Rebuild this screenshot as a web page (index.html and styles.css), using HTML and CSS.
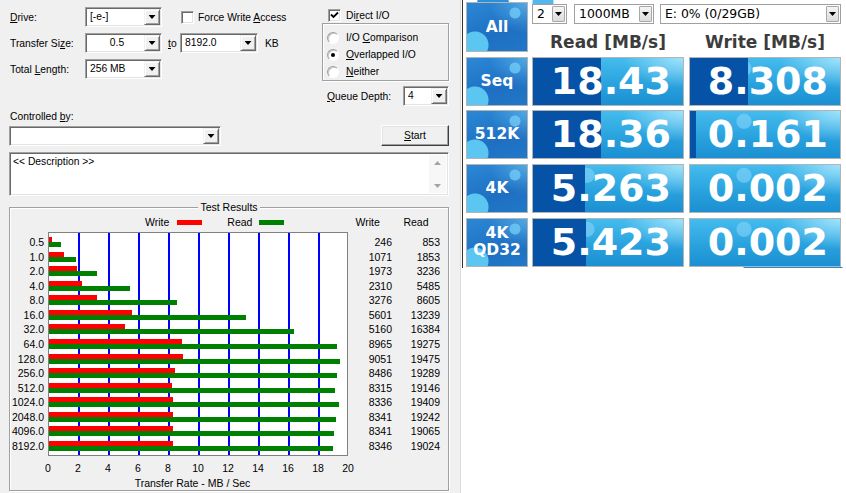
FILE: index.html
```html
<!DOCTYPE html>
<html>
<head>
<meta charset="utf-8">
<link rel="stylesheet" href="styles.css">
</head>
<body>
<div class="screen">
  <div class="atto">
    <div class="top">
      <div class="form">
        <div class="frow">
          <span class="lbl"><u>D</u>rive:</span>
          <div class="combo c77"><span class="cv">[-e-]</span><i class="cb"></i></div>
          <span class="check fwa"></span><span class="ctext">Force Write <u>A</u>ccess</span>
        </div>
        <div class="frow">
          <span class="lbl">Transfer Si<u>z</u>e:</span>
          <div class="combo c77"><span class="cv center">0.5</span><i class="cb"></i></div>
          <span class="to"><u>t</u>o</span>
          <div class="combo c78"><span class="cv">8192.0</span><i class="cb"></i></div>
          <span class="kb">KB</span>
        </div>
        <div class="frow">
          <span class="lbl">Total <u>L</u>ength:</span>
          <div class="combo c77"><span class="cv">256 MB</span><i class="cb"></i></div>
        </div>
      </div>
      <div class="opts">
        <div class="orow">
          <span class="check"><svg width="11" height="11" viewBox="0 0 11 11"><path d="M2 4.5 L4.5 7 L9 2.5" fill="none" stroke="#000" stroke-width="1.8"/></svg></span>
          <span class="ctext">Di<u>r</u>ect I/O</span>
        </div>
        <div class="rgroup">
          <div class="rrow"><span class="radio"></span><span>I/O <u>C</u>omparison</span></div>
          <div class="rrow"><span class="radio on"></span><span><u>O</u>verlapped I/O</span></div>
          <div class="rrow"><span class="radio"></span><span><u>N</u>either</span></div>
        </div>
        <div class="qrow">
          <span><u>Q</u>ueue Depth:</span>
          <div class="combo c46"><span class="cv">4</span><i class="cb"></i></div>
        </div>
      </div>
    </div>
    <div class="ctl-label">Controlled <u>b</u>y:</div>
    <div class="ctl-row">
      <div class="combo c212"><span class="cv"></span><i class="cb"></i></div>
      <div class="btn"><span><u>S</u>tart</span></div>
    </div>
    <div class="desc">
      <div class="desc-text">&lt;&lt; Description &gt;&gt;</div>
      <div class="sbar"><i class="sup"></i><i class="sdown"></i></div>
    </div>
    <div class="results">
      <div class="gtitle">Test Results</div>
      <div class="legend">
        <span class="lg-w">Write</span><i class="sw red"></i>
        <span class="lg-r">Read</span><i class="sw green"></i>
        <span class="hd-w">Write</span><span class="hd-r">Read</span>
      </div>
      <div class="chartrow">
        <div class="ylab">
          <div>0.5</div><div>1.0</div><div>2.0</div><div>4.0</div><div>8.0</div><div>16.0</div><div>32.0</div><div>64.0</div><div>128.0</div><div>256.0</div><div>512.0</div><div>1024.0</div><div>2048.0</div><div>4096.0</div><div>8192.0</div>
        </div>
        <div class="plot">
          <div class="brow"><i class="w" style="width:3px"></i><i class="r" style="width:12px"></i></div>
          <div class="brow"><i class="w" style="width:15px"></i><i class="r" style="width:27px"></i></div>
          <div class="brow"><i class="w" style="width:28px"></i><i class="r" style="width:48px"></i></div>
          <div class="brow"><i class="w" style="width:33px"></i><i class="r" style="width:81px"></i></div>
          <div class="brow"><i class="w" style="width:48px"></i><i class="r" style="width:128px"></i></div>
          <div class="brow"><i class="w" style="width:83px"></i><i class="r" style="width:197px"></i></div>
          <div class="brow"><i class="w" style="width:76px"></i><i class="r" style="width:245px"></i></div>
          <div class="brow"><i class="w" style="width:133px"></i><i class="r" style="width:288px"></i></div>
          <div class="brow"><i class="w" style="width:134px"></i><i class="r" style="width:291px"></i></div>
          <div class="brow"><i class="w" style="width:126px"></i><i class="r" style="width:288px"></i></div>
          <div class="brow"><i class="w" style="width:123px"></i><i class="r" style="width:286px"></i></div>
          <div class="brow"><i class="w" style="width:124px"></i><i class="r" style="width:290px"></i></div>
          <div class="brow"><i class="w" style="width:124px"></i><i class="r" style="width:287px"></i></div>
          <div class="brow"><i class="w" style="width:124px"></i><i class="r" style="width:285px"></i></div>
          <div class="brow"><i class="w" style="width:124px"></i><i class="r" style="width:284px"></i></div>
        </div>
        <div class="nums nw">
          <div>246</div><div>1071</div><div>1973</div><div>2310</div><div>3276</div><div>5601</div><div>5160</div><div>8965</div><div>9051</div><div>8486</div><div>8315</div><div>8336</div><div>8341</div><div>8341</div><div>8346</div>
        </div>
        <div class="nums nr">
          <div>853</div><div>1853</div><div>3236</div><div>5485</div><div>8605</div><div>13239</div><div>16384</div><div>19275</div><div>19475</div><div>19289</div><div>19146</div><div>19409</div><div>19242</div><div>19065</div><div>19024</div>
        </div>
      </div>
      <div class="xlab">
        <span>0</span><span>2</span><span>4</span><span>6</span><span>8</span><span>10</span><span>12</span><span>14</span><span>16</span><span>18</span><span>20</span>
      </div>
      <div class="xtitle">Transfer Rate - MB / Sec</div>
    </div>
  </div>
  <div class="right">
    <div class="cdm">
      <div class="lb all">All</div>
      <div class="topctl">
        <div class="ddrow">
          <div class="dd d35"><span class="dv">2</span><i class="db"></i></div>
          <div class="dd d80"><span class="dv">1000MB</span><i class="db"></i></div>
          <div class="dd d181"><span class="dv">E: 0% (0/29GB)</span><i class="db"></i></div>
        </div>
        <div class="heads"><span class="hr">Read [MB/s]</span><span class="hw">Write [MB/s]</span></div>
      </div>
      <div class="lb">Seq</div>
      <div class="vb" style="--m:68px">18.43</div>
      <div class="vb wcol" style="--m:58px">8.308</div>
      <div class="lb">512K</div>
      <div class="vb" style="--m:68px">18.36</div>
      <div class="vb wcol" style="--m:6px">0.161</div>
      <div class="lb">4K</div>
      <div class="vb" style="--m:52px">5.263</div>
      <div class="vb wcol" style="--m:0px">0.002</div>
      <div class="lb two">4K<br>QD32</div>
      <div class="vb" style="--m:53px">5.423</div>
      <div class="vb wcol" style="--m:0px">0.002</div>
    </div>
  </div>
</div>
</body>
</html>
```
FILE: styles.css
```css
* { box-sizing: border-box; }
html, body { margin: 0; padding: 0; }
body { width: 846px; height: 493px; overflow: hidden; background: #fff; }
.screen { display: flex; width: 846px; height: 493px; }

/* ---------- ATTO ---------- */
.atto {
  width: 460px; height: 493px; flex: none;
  background: #f0f0f0; color: #000;
  font-family: "Liberation Sans", Arial, sans-serif; font-size: 10.3px;
}
.top { display: flex; height: 108px; }
.form { margin-left: 10px; padding-top: 7px; width: 312px; }
.frow { display: flex; align-items: center; height: 20px; margin-bottom: 6px; white-space: nowrap; }
.lbl { width: 75px; flex: none; }

.combo {
  display: flex; align-items: center; height: 20px; flex: none;
  background: #fff; padding: 1px;
  border: 1px solid; border-color: #a0a0a0 #fff #fff #a0a0a0;
  box-shadow: inset 1px 1px #696969, inset -1px -1px #e3e3e3;
}
.c77 { width: 77px; }
.c78 { width: 78px; }
.c46 { width: 46px; }
.c212 { width: 212px; }
.cv { flex: 1; padding-left: 3px; line-height: 16px; white-space: nowrap; overflow: hidden; }
.cv.center { text-align: center; }
.cb {
  width: 16px; height: 16px; flex: none; display: flex; align-items: center; justify-content: center;
  background: #f0f0f0;
  border: 1px solid; border-color: #f0f0f0 #696969 #696969 #f0f0f0;
  box-shadow: inset 1px 1px #fff, inset -1px -1px #a0a0a0;
}
.cb::after { content: ""; width: 7px; height: 4px; background: #000; clip-path: polygon(0 0, 100% 0, 50% 100%); }

.check {
  width: 13px; height: 13px; flex: none; background: #fff; display: flex; align-items: center; justify-content: center;
  border: 1px solid; border-color: #a0a0a0 #fff #fff #a0a0a0;
  box-shadow: inset 1px 1px #696969, inset -1px -1px #e3e3e3;
}
.check svg { display: block; }
.fwa { margin-left: 19px; }
.ctext { margin-left: 4px; }
.to { margin-left: 6px; width: 12px; }
.kb { margin-left: 7px; }

.opts { width: 127px; padding-top: 8px; }
.orow { display: flex; align-items: center; height: 14px; padding-left: 6px; white-space: nowrap; }
.orow .ctext { margin-left: 5px; }
.rgroup {
  margin-top: 1px; height: 58px; padding: 5px 0 0 4px;
  border: 1px solid #a0a0a0; box-shadow: inset 1px 1px #fff, 1px 1px #fff;
}
.rrow { display: flex; align-items: center; height: 17px; white-space: nowrap; }
.radio {
  width: 12px; height: 12px; border-radius: 50%; flex: none; margin-right: 7px;
  background: #fff; border: 1px solid; border-color: #a0a0a0 #fff #fff #a0a0a0;
  box-shadow: inset 1px 1px #c8c8c8; display: flex; align-items: center; justify-content: center;
}
.radio.on::after { content: ""; width: 4px; height: 4px; border-radius: 50%; background: #000; }
.qrow { display: flex; align-items: center; margin-top: 5px; padding-left: 5px; white-space: nowrap; }
.qrow .combo { margin-left: auto; }

.ctl-label { margin-left: 10px; height: 17px; line-height: 18px; }
.ctl-row { display: flex; align-items: flex-start; height: 21px; margin-left: 9px; }
.ctl-row .combo { margin-top: 1px; }
.btn {
  margin-left: 160px; width: 68px; height: 21px; display: flex; align-items: center; justify-content: center;
  background: #f0f0f0;
  border: 1px solid; border-color: #fff #404040 #404040 #fff;
  box-shadow: inset -1px -1px #a0a0a0, inset 1px 1px #e3e3e3;
}
.desc {
  margin: 6px 0 0 9px; width: 440px; height: 44px; display: flex;
  background: #fff; padding: 2px;
  border: 1px solid; border-color: #a0a0a0 #fff #fff #a0a0a0;
  box-shadow: inset 1px 1px #696969, inset -1px -1px #e3e3e3;
}
.desc-text { flex: 1; padding: 1px 0 0 1px; line-height: 12px; }
.sbar { width: 17px; background: #f7f7f7; display: flex; flex-direction: column; justify-content: space-between; align-items: center; padding: 6px 0 5px; }
.sup, .sdown { width: 7px; height: 4px; background: #a3a3a3; }
.sup { clip-path: polygon(50% 0, 100% 100%, 0 100%); }
.sdown { clip-path: polygon(0 0, 100% 0, 50% 100%); }

.results {
  margin: 11px 0 0 9px; width: 440px; height: 284px;
  border: 1px solid #a0a0a0; box-shadow: inset 1px 1px #fff, 1px 1px #fff;
  font-size: 10.5px;
}
.gtitle { display: table; margin: -7px auto 0; padding: 0 2px; background: #f0f0f0; line-height: 13px; }
.legend { display: flex; align-items: center; height: 16px; padding-left: 135px; white-space: nowrap; }
.sw { width: 25px; height: 5px; flex: none; }
.red { background: #f00; margin-left: 8px; }
.green { background: #008000; margin-left: 7px; }
.lg-r { margin-left: 25px; }
.hd-w { margin-left: 71px; width: 48px; }

.chartrow { display: flex; margin-top: 2px; }
.ylab { width: 38px; padding-top: 5px; padding-right: 4px; text-align: right; }
.ylab div, .nums div { height: 14.57px; line-height: 10px; }
.plot {
  width: 300px; height: 224px; padding-top: 4px;
  border: 1px solid #808080;
  background:
    linear-gradient(90deg, #fff 0 1px, transparent 1px) 0 0 / 100% 100% no-repeat,
    linear-gradient(90deg, #00f 0 2px, transparent 2px) 29px 0 / 30px 100% repeat-x,
    #fff;
}
.brow { height: 14.57px; }
.brow i { display: block; height: 5px; }
.brow .w { background: #f00; }
.brow .r { background: #008000; }
.nums { padding-top: 5px; text-align: right; }
.nw { width: 44px; }
.nr { width: 48px; }

.xlab { display: flex; margin: 5px 0 0 23px; height: 14px; line-height: 14px; }
.xlab span { width: 30px; text-align: center; flex: none; }
.xtitle { width: 365px; text-align: center; line-height: 14px; margin-top: 1px; }

/* ---------- CrystalDiskMark ---------- */
.right { flex: 1; border-left: 1px solid #dcdcdc; background: #fff; }
.cdm {
  margin-left: 1px; height: 268px; padding: 2px 0 0 3px;
  border-left: 1px solid #3b3025;
  display: grid; grid-template-columns: 62px 152px 153px; grid-template-rows: 50px repeat(4, 49px);
  column-gap: 4px; row-gap: 4.67px;
  font-family: "DejaVu Sans", Verdana, sans-serif;
  background:
    radial-gradient(circle at 30px 6px, #2e8fd8 0 16px, transparent 17px),
    radial-gradient(circle at 80px 2px, #56b8ea 0 10px, transparent 11px),
    radial-gradient(ellipse 70px 8px at 330px 268px, #1d90d4 0 70%, transparent 72%),
    #fff;
}
.lb {
  border: 1px solid #b4b4b4; display: flex; align-items: center; justify-content: center; text-align: center;
  color: #fff; font-weight: bold; font-size: 15.5px; line-height: 17px;
  background:
    radial-gradient(circle at 8px 42px, #5cc6f2 0 13px, transparent 14px),
    radial-gradient(circle at 48px 10px, rgba(120,210,250,.7) 0 5px, transparent 6px),
    radial-gradient(ellipse at 100% 0, rgba(110,200,245,.6) 0, transparent 45%),
    linear-gradient(160deg, #2b88d6 0%, #1e6fc2 60%, #2178c8 100%);
}
.topctl { grid-column: 2 / 4; }
.ddrow { display: flex; margin-top: 2px; height: 20px; }
.dd {
  display: flex; align-items: center; height: 20px; background: #fff;
  border: 1px solid #a0a0a0; padding: 1px; font-size: 12.4px; color: #000;
}
.d35 { width: 35px; margin-right: 7px; }
.d80 { width: 80px; margin-right: 6px; }
.d181 { width: 181px; }
.dv { flex: 1; padding-left: 3px; line-height: 16px; white-space: nowrap; }
.db {
  width: 13px; height: 16px; flex: none; display: flex; align-items: center; justify-content: center;
  border: 1px solid #a8a8a8; border-radius: 1px;
  background: linear-gradient(#f4f4f4, #dcdcdc);
}
.db::after { content: ""; width: 7px; height: 4px; background: #000; clip-path: polygon(0 0, 100% 0, 50% 100%); }
.heads { display: grid; grid-template-columns: 152px 157px; margin-top: 9px; }
.heads span { text-align: center; font-weight: bold; font-size: 17px; line-height: 18px; color: #3c3c3c; white-space: nowrap; }
.hw { padding-left: 5px; }
.vb {
  border: 1px solid #b4b4b4; color: #fff; font-weight: bold; font-size: 38px; line-height: 47px;
  text-align: right; padding-right: 12px; white-space: nowrap; overflow: hidden;
  background:
    linear-gradient(90deg, #0552a6 0 var(--m), transparent var(--m)),
    radial-gradient(ellipse 60px 30px at 100% 0, rgba(190,240,255,.75) 0, transparent 100%),
    radial-gradient(circle at 36% 22%, rgba(140,215,250,.55) 0 7px, transparent 8px),
    linear-gradient(180deg, #44bcee 0%, #2aa2de 55%, #1b8fd2 100%);
}
.wcol { width: 152px; justify-self: end; }
```
